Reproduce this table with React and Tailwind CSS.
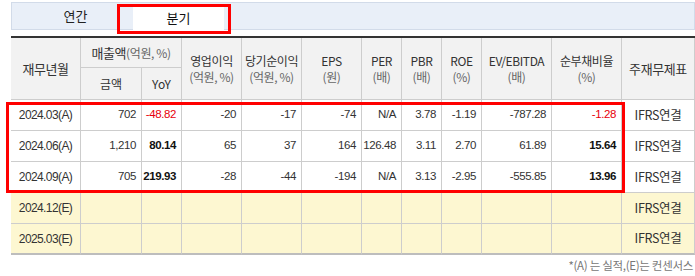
import React from "react";

const KR = { fontFamily: '"Noto Sans CJK KR", "Liberation Sans", sans-serif' };
const NUM = { fontFamily: '"Liberation Sans", "Noto Sans CJK KR", sans-serif' };

const cell = "border-r border-b border-[#cdcdcd] flex items-center";

function H({ top, sub, big = false }) {
  return (
    <div className={`${cell} bg-[#f2f2f2] row-span-2 flex-col justify-center text-center leading-[16px]`}>
      <div className={`text-[#333] tracking-[-0.4px] ${big ? "text-[13px]" : "text-[12px]"}`}>{top}</div>
      {sub && <div className="text-[#666] text-[12px] tracking-[-0.4px]">{sub}</div>}
    </div>
  );
}

const rows = [
  { d: "2024.03(A)", v: ["702", "-48.82", "-20", "-17", "-74", "N/A", "3.78", "-1.19", "-787.28", "-1.28"], red: [1, 9], bold: [] },
  { d: "2024.06(A)", v: ["1,210", "80.14", "65", "37", "164", "126.48", "3.11", "2.70", "61.89", "15.64"], red: [], bold: [1, 9] },
  { d: "2024.09(A)", v: ["705", "219.93", "-28", "-44", "-194", "N/A", "3.13", "-2.95", "-555.85", "13.96"], red: [], bold: [1, 9] },
];
const est = ["2024.12(E)", "2025.03(E)"];

export default function App() {
  return (
    <div className="relative w-[695px] h-[276px] bg-white overflow-hidden" style={KR}>
      {/* tab bar */}
      <div className="ml-[11px] mt-[2px] h-[28px] border border-[#d2dbe9] bg-[#e9eff8] flex items-end">
        <div className="w-[121px] h-[26px] flex items-center justify-center pl-[6px] text-[13px] text-[#222]">연간</div>
        <div className="w-[91px] h-[24px] bg-white flex items-center justify-center text-[13px] text-[#111] -mb-[1px]">분기</div>
      </div>

      {/* table */}
      <div className="ml-[11px] mt-[6px] border-t-2 border-[#333]">
        <div className="grid grid-cols-[70px_61px_40px_60px_60px_60px_40px_40px_40px_70px_70px_73px] grid-rows-[30px_32px_31px_31px_31px_31px_31px]">
          <H top="재무년월" big />
          <div className={`${cell} col-span-2 bg-[#f2f2f2] justify-center text-[12px] tracking-[-0.4px]`}>
            <span className="text-[#333] text-[13px]">매출액</span>
            <span className="text-[#666]">(억원, %)</span>
          </div>
          <H top="영업이익" sub="(억원, %)" />
          <H top="당기순이익" sub="(억원, %)" />
          <H top="EPS" sub="(원)" />
          <H top="PER" sub="(배)" />
          <H top="PBR" sub="(배)" />
          <H top="ROE" sub="(%)" />
          <H top="EV/EBITDA" sub="(배)" />
          <H top="순부채비율" sub="(%)" />
          <H top="주재무제표" big />
          <div className={`${cell} bg-[#f2f2f2] justify-center text-[12px] text-[#333]`}>금액</div>
          <div className={`${cell} bg-[#f2f2f2] justify-center text-[12px] text-[#333]`}>YoY</div>

          {rows.map((r) => (
            <React.Fragment key={r.d}>
              <div className={`${cell} justify-center text-[12px] tracking-[-0.6px] text-[#333]`} style={NUM}>{r.d}</div>
              {r.v.map((v, i) => (
                <div
                  key={i}
                  className={`${cell} justify-end pr-[5px] text-[11.5px] tracking-[-0.4px] ${
                    r.red.includes(i) ? "text-[#e8000b]" : r.bold.includes(i) ? "text-[#111] font-bold" : "text-[#333]"
                  }`}
                  style={NUM}
                >
                  {v}
                </div>
              ))}
              <div className={`${cell} justify-center text-[12.5px] tracking-[-0.3px] text-[#333]`}>IFRS연결</div>
            </React.Fragment>
          ))}

          {est.map((d, ri) => (
            <React.Fragment key={d}>
              <div className={`${cell} bg-[#fdf7d1] justify-center text-[12px] tracking-[-0.6px] text-[#333] ${ri === 1 ? "border-b-2 border-b-[#bdbdbd]" : ""}`} style={NUM}>{d}</div>
              {Array.from({ length: 10 }).map((_, i) => (
                <div key={i} className={`${cell} bg-[#fdf7d1] ${ri === 1 ? "border-b-2 border-b-[#bdbdbd]" : ""}`} />
              ))}
              <div className={`${cell} bg-[#fdf7d1] justify-center text-[12.5px] tracking-[-0.3px] text-[#333] ${ri === 1 ? "border-b-2 border-b-[#bdbdbd]" : ""}`}>IFRS연결</div>
            </React.Fragment>
          ))}
        </div>
        <div className="mt-[3px] pr-[2px] text-right text-[11.5px] leading-[14px] text-[#777] tracking-[-0.3px]">*(A) 는 실적,(E)는 컨센서스</div>
      </div>

      {/* annotation overlays */}
      <div className="absolute left-[117px] top-[4px] w-[114px] h-[30px] border-[3px] border-[#f00] pointer-events-none" />
      <div className="absolute left-[6px] top-[102px] w-[619px] h-[91px] border-[3px] border-[#f00] pointer-events-none" />
    </div>
  );
}
